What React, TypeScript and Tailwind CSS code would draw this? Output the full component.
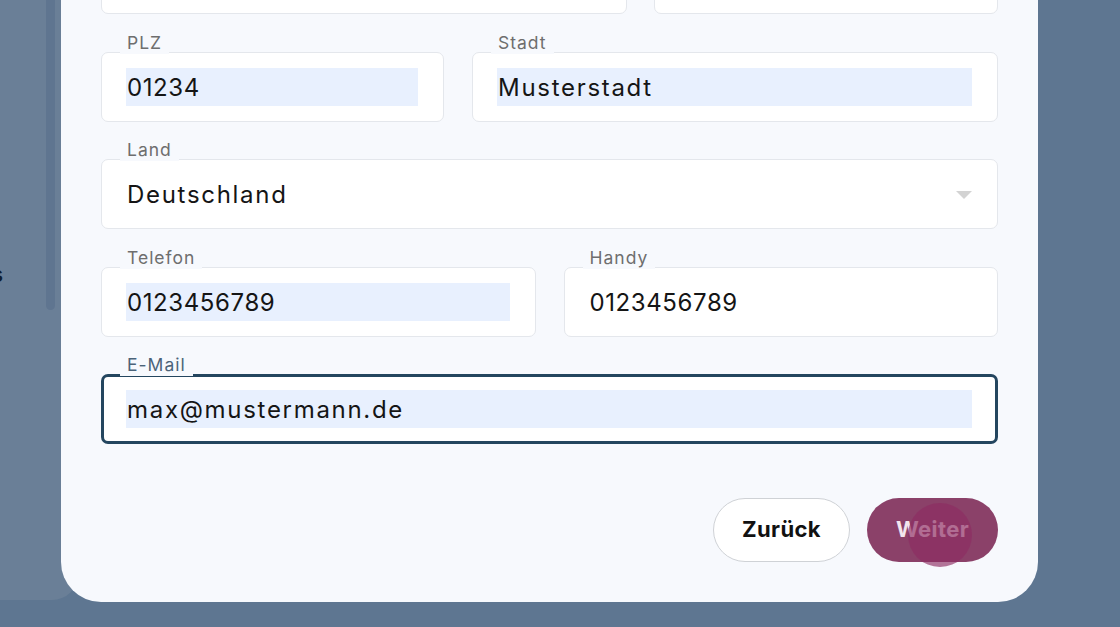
import React from "react";

type FieldProps = {
  label: string;
  value?: string;
  filled?: boolean;
  focused?: boolean;
  select?: boolean;
  digits?: boolean;
  className?: string;
};

function Field({ label, value = "", filled = false, focused = false, select = false, digits = false, className = "" }: FieldProps) {
  return (
    <div className={`relative h-[70px] ${className}`}>
      {/* outline */}
      <div
        className={`absolute inset-0 rounded-[7px] bg-white ${
          focused ? "border-[3px] border-[#24465f]" : "border-[1.5px] border-[#e4e7ec]"
        }`}
      />
      {label && (
        <span
          className={`absolute left-[19px] -top-[20px] px-[7px] h-[22px] leading-[22px] text-[17.5px] tracking-[1px] bg-[#f7f9fd] ${
            focused ? "text-[#4b6379]" : "text-[#6e6e6e]"
          }`}
        >
          {label}
        </span>
      )}
      <div className="relative flex h-full items-center pl-[25px] pr-[26px]">
        <div
          className={`flex h-[38px] flex-1 items-center pl-[1px] pt-[2px] text-[24px] text-[#151515] ${
            digits ? "tracking-[0.6px]" : "tracking-[1.7px]"
          } ${filled ? "bg-[#e8f0fe]" : ""}`}
        >
          {value}
        </div>
        {select && (
          <svg width="16" height="9" viewBox="0 0 16 9" className="ml-2 mt-[2px]">
            <path d="M0 0 L16 0 L8 8 Z" fill="#d3d3d3" />
          </svg>
        )}
      </div>
    </div>
  );
}

export default function App() {
  return (
    <div
      className="relative h-[627px] w-full overflow-hidden bg-[#5e7691]"
      style={{ fontFamily: "Inter, 'Open Sans', sans-serif" }}
    >
      {/* page behind the dialog */}
      <div className="relative h-[600px] w-[78px] overflow-hidden rounded-br-[26px] bg-[#6a7f97]">
        <div className="absolute left-[46px] top-0 h-[310px] w-[9px] rounded-b-full bg-[#5f7590]" />
        <span className="absolute -left-[9px] top-[258px] text-[22px] font-semibold text-[#0f1d30]">s</span>
      </div>

      {/* dialog */}
      <div className="absolute left-[61px] top-0 h-[602px] w-[977px] overflow-hidden rounded-b-[40px] bg-[#f7f9fd]">
        <div className="-mt-[56px] flex flex-col gap-[37.5px] px-[40px]">
          <div className="flex gap-[27px]">
            <Field label="" className="flex-1" />
            <Field label="" className="w-[344px]" />
          </div>
          <div className="flex gap-[28px]">
            <Field label="PLZ" value="01234" filled digits className="w-[343px]" />
            <Field label="Stadt" value="Musterstadt" filled className="flex-1" />
          </div>
          <Field label="Land" value="Deutschland" select />
          <div className="flex gap-[28px]">
            <Field label="Telefon" value="0123456789" filled digits className="flex-1" />
            <Field label="Handy" value="0123456789" digits className="flex-1" />
          </div>
          <Field label="E-Mail" value="max@mustermann.de" filled focused />

          <div className="mt-[16px] flex justify-end gap-[17px]">
            <button className="h-[64px] w-[137px] rounded-full border-[1.5px] border-[#cfd2d6] bg-white text-[22px] font-bold tracking-[0.4px] text-[#111]">
              Zurück
            </button>
            <button className="relative h-[64px] w-[131px] rounded-full bg-[#8b4169] text-[22px] font-bold tracking-[0.4px] text-[#f3e6ee]">
              <span className="relative">Weiter</span>
              <span className="absolute left-[41px] top-[5px] h-[64px] w-[64px] rounded-full bg-[#8e2c63]/65" />
            </button>
          </div>
        </div>
      </div>
    </div>
  );
}
